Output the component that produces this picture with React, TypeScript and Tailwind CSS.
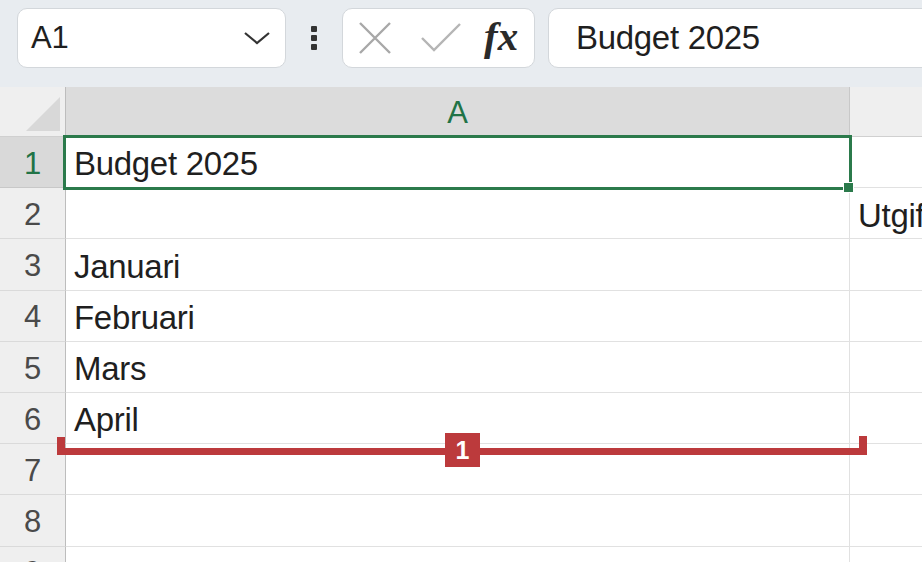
import React from "react";

const rows = [
  { n: 1, a: "Budget 2025", b: "" },
  { n: 2, a: "", b: "Utgifter" },
  { n: 3, a: "Januari", b: "" },
  { n: 4, a: "Februari", b: "" },
  { n: 5, a: "Mars", b: "" },
  { n: 6, a: "April", b: "" },
  { n: 7, a: "", b: "" },
  { n: 8, a: "", b: "" },
  { n: 9, a: "", b: "" },
];

export default function App() {
  return (
    <div
      className="relative w-[922px] h-[562px] overflow-hidden bg-white text-[#1f1f1f]"
      style={{ fontFamily: '"Liberation Sans", Arial, sans-serif' }}
    >
      {/* toolbar */}
      <div className="h-[87px] bg-[#e8ecf0] flex items-start pt-[8px] pl-[17px]">
        <div className="w-[269px] h-[60px] bg-white border border-[#d3d7db] rounded-[10px] flex items-center pl-[13px] pr-[14px] shrink-0">
          <span className="text-[31px] tracking-[-0.3px] flex-1">A1</span>
          <svg width="28" height="16" viewBox="0 0 28 16">
            <path d="M2 3 L14 13 L26 3" fill="none" stroke="#333" strokeWidth="2.2" />
          </svg>
        </div>
        <div className="w-[56px] h-[60px] flex flex-col items-center justify-center gap-[3px] shrink-0">
          <div className="w-[6px] h-[6px] bg-[#333] rounded-[1px]" />
          <div className="w-[6px] h-[6px] bg-[#333] rounded-[1px]" />
          <div className="w-[6px] h-[6px] bg-[#333] rounded-[1px]" />
        </div>
        <div className="w-[193px] h-[60px] bg-white border border-[#d3d7db] rounded-[10px] flex items-center pl-[15px] shrink-0">
          <svg width="34" height="34" viewBox="0 0 34 34">
            <path d="M2 2 L32 32 M32 2 L2 32" stroke="#a8a8a8" strokeWidth="2.4" fill="none" />
          </svg>
          <svg width="42" height="34" viewBox="0 0 42 34" className="ml-[28px]">
            <path d="M2 17 L14 29 L40 3" stroke="#b5b5b5" strokeWidth="2.4" fill="none" />
          </svg>
          <span
            className="ml-[22px] text-[41px] italic font-bold leading-none text-[#2a2a2a] pb-[4px]"
            style={{ fontFamily: '"Liberation Serif", "Times New Roman", serif' }}
          >
            fx
          </span>
        </div>
        <div className="ml-[13px] w-[420px] h-[60px] bg-white border border-[#d3d7db] rounded-[10px] flex items-center pl-[27px] shrink-0">
          <span className="text-[33px] tracking-[-0.3px]">Budget 2025</span>
        </div>
      </div>

      {/* grid header */}
      <div className="flex h-[50px] border-b border-[#d0d0d0]">
        <div className="w-[66px] shrink-0 bg-[#efefef] border-r border-[#bdbdbd] relative">
          <svg width="40" height="40" viewBox="0 0 40 40" className="absolute left-[22px] top-[8px]">
            <path d="M38 2 L38 36 L4 36 Z" fill="#d8d8d8" />
          </svg>
        </div>
        <div className="w-[784px] shrink-0 bg-[#dcdcdc] border-r border-[#c8c8c8] flex items-center justify-center text-[31px] text-[#217346]">
          <span className="pt-[4px]">A</span>
        </div>
        <div className="flex-1 bg-[#efefef]" />
      </div>

      {/* rows */}
      {rows.map((r) => (
        <div key={r.n} className="flex h-[51.2px]">
          <div
            className={`w-[66px] shrink-0 border-r border-[#bdbdbd] border-b flex items-center justify-center text-[31px] ${
              r.n === 1 ? "bg-[#d9d9d9] text-[#217346] border-b-[#c8c8c8]" : "bg-[#efefef] text-[#4a4a4a] border-b-[#dadada]"
            }`}
          >
            <span className="pt-[4px]">{r.n}</span>
          </div>
          <div className="w-[784px] shrink-0 border-r border-b border-[#e1e1e1] flex items-center pl-[8px] text-[33px] tracking-[-0.3px]">
            <span className="pt-[4px]">{r.a}</span>
          </div>
          <div className="flex-1 border-b border-[#e1e1e1] flex items-center pl-[8px] text-[33px] tracking-[-0.3px] overflow-hidden whitespace-nowrap">
            <span className="pt-[4px]">{r.b}</span>
          </div>
        </div>
      ))}

      {/* selection */}
      <div className="absolute left-[63px] top-[135px] w-[789px] h-[55px] border-[3px] border-[#2b7a4b]" />
      <div className="absolute left-[843px] top-[182px] w-[11px] h-[11px] bg-[#2b7a4b] border border-white" />

      {/* red annotation */}
      <div className="absolute left-[57px] top-[448px] w-[810px] h-[7px] bg-[#bc3a3c]" />
      <div className="absolute left-[57px] top-[437px] w-[8px] h-[18px] bg-[#bc3a3c]" />
      <div className="absolute left-[859px] top-[436px] w-[8px] h-[19px] bg-[#bc3a3c]" />
      <div className="absolute left-[445px] top-[433px] w-[35px] h-[34px] bg-[#bc3a3c] flex items-center justify-center text-white text-[25px] font-bold leading-none">
        1
      </div>
    </div>
  );
}
